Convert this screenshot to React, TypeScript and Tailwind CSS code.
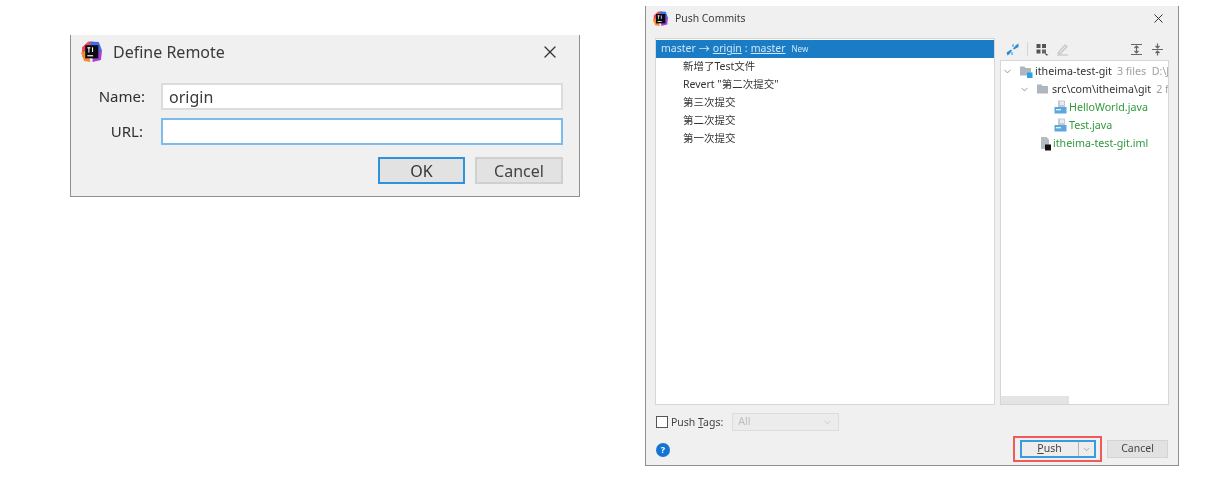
import type { ReactNode } from "react";
import { ChevronDown, X } from "lucide-react";

const font = "font-['Noto_Sans','Noto_Sans_CJK_SC',sans-serif]";

function IdeaLogo({ size }: { size: number }) {
  return (
    <svg width={size} height={size} viewBox="0 0 20 20" className="shrink-0">
      <path d="M1 6 L7 0.5 L13 1 L11 12 L1 15 Z" fill="#f0435f" />
      <path d="M9 0.5 L17 1 L20 9 L16 13 L9 8 Z" fill="#3f6fe8" />
      <path d="M0 11 L6 9 L9 20 L3 19 Z" fill="#f58b2c" />
      <path d="M11 11 L20 9 L19 18 L11 20 Z" fill="#a83fd6" />
      <rect x="4" y="4" width="12.5" height="12.5" fill="#0b0b10" />
      <rect x="6" y="13.5" width="5.5" height="1.1" fill="#fff" />
      <rect x="6" y="6" width="3" height="1" fill="#fff" />
      <rect x="7" y="6" width="1" height="5" fill="#fff" />
      <rect x="10.5" y="6" width="1" height="4.5" fill="#fff" />
    </svg>
  );
}

function Folder({ badge }: { badge?: boolean }) {
  return (
    <svg width="13" height="13" viewBox="0 0 13 13" className="shrink-0">
      <path d="M0 1.5 H4.5 L5.5 3 H11 V10.5 H0 Z" fill="#aeb6bf" />
      {badge && <rect x="7" y="7.5" width="5.5" height="5.5" fill="#2aa3e6" />}
    </svg>
  );
}

function JavaFile() {
  return (
    <svg width="13" height="14" viewBox="0 0 13 14" className="shrink-0">
      <path d="M4 0.5 H11 V8 H4 Z" fill="#c3cbd3" />
      <path d="M6 1.5 H10 V5 H6 Z" fill="#e8ecef" />
      <rect x="0.5" y="7" width="12" height="6.5" fill="#5ba7de" />
      <rect x="2" y="9" width="5" height="1.4" fill="#dcecf8" />
    </svg>
  );
}

function ImlFile() {
  return (
    <svg width="11" height="15" viewBox="0 0 11 15" className="shrink-0">
      <path d="M1 1 H6.5 L9 3.5 V13 H1 Z" fill="#b4bbc2" />
      <rect x="5" y="8.5" width="6" height="6" fill="#111" />
    </svg>
  );
}

function Field({ label, value, focused }: { label: string; value?: string; focused?: boolean }) {
  return (
    <div className="flex items-center">
      <span className={`w-[74px] text-right text-[15px] text-[#303030] ${focused ? "pr-[2px]" : ""}`}>{label}</span>
      <div
        className={`ml-[16px] flex h-[27px] flex-1 items-center border-2 bg-white pl-[6px] text-[16px] text-[#3a3a3a] ${
          focused ? "border-[#7cbcec]" : "border-[#dcdcdc]"
        }`}
      >
        {value}
      </div>
    </div>
  );
}

function DefineRemoteDialog() {
  return (
    <div className="ml-[70px] mt-[35px] flex h-[162px] w-[510px] shrink-0 flex-col border-x border-b border-[#8f8f8f] bg-[#f0f0f0]">
      <div className="flex h-[33px] items-center pl-[10px] pr-[19px]">
        <IdeaLogo size={21} />
        <span className="ml-[11px] text-[16px] text-[#3a3a3a]">Define Remote</span>
        <X className="ml-auto text-[#333]" size={20} strokeWidth={1.5} />
      </div>
      <div className="mt-[15px] flex flex-col gap-[8px] pr-[16px]">
        <Field label="Name:" value="origin" />
        <Field label="URL:" focused />
      </div>
      <div className="mt-[12px] flex justify-end gap-[10px] pr-[16px]">
        <div className="flex h-[27px] w-[87px] items-center justify-center border-2 border-[#2f92dc] bg-[#e2e2e2] text-[16px] text-[#333]">
          OK
        </div>
        <div className="flex h-[27px] w-[88px] items-center justify-center border-2 border-[#d0d0d0] bg-[#e2e2e2] text-[16px] text-[#444]">
          Cancel
        </div>
      </div>
    </div>
  );
}

const commits = ["新增了Test文件", 'Revert "第二次提交"', "第三次提交", "第二次提交", "第一次提交"];

function CommitList() {
  return (
    <div className="flex w-[340px] flex-col border border-[#d6d6d6] bg-white pt-[1px] text-[10.5px]">
      <div className="flex h-[18px] items-center bg-[#1b7cc6] pl-[5px] text-[#cfe6f7]">
        master <span className="mx-[3px] text-[11px]">→</span> <span className="underline">origin</span>
        <span className="mx-[3px]">:</span> <span className="underline">master</span>
        <span className="ml-[6px] text-[8px]">New</span>
      </div>
      {commits.map((c) => (
        <div key={c} className="flex h-[18px] items-center pl-[27px] text-[#333]">
          {c}
        </div>
      ))}
    </div>
  );
}

function TreeRow({ indent, chevron, icon, name, hint, green }: {
  indent: number;
  chevron?: boolean;
  icon: ReactNode;
  name: string;
  hint?: string;
  green?: boolean;
}) {
  return (
    <div className="flex h-[18px] items-center whitespace-pre" style={{ paddingLeft: indent }}>
      {chevron && <ChevronDown className="mr-[7px] shrink-0 text-[#777]" size={11} strokeWidth={1.6} />}
      {icon}
      <span className={`ml-[2px] ${green ? "text-[#2f9a3c]" : "text-[#333]"}`}>{name}</span>
      {hint && <span className="ml-[5px] text-[#a0a0a0]">{hint}</span>}
    </div>
  );
}

function Toolbar() {
  return (
    <div className="flex h-[22px] items-center pl-[6px] pr-[5px]">
      <svg width="13" height="13" viewBox="0 0 13 13">
        <path d="M0.5 9.5 L5 6.5 L6 7.5 L3.5 11 L1.5 12.5 Z M7 5.5 L10 2 L12.5 0.5 L12.5 4 L8 6.5 Z" fill="#2a8fd8" />
        <rect x="6.5" y="1" width="1" height="3" fill="#2a8fd8" />
        <rect x="5.5" y="9" width="1" height="3" fill="#2a8fd8" />
      </svg>
      <div className="mx-[8px] h-[14px] w-px bg-[#d4d4d4]" />
      <svg width="13" height="13" viewBox="0 0 13 13">
        <rect x="0.5" y="1" width="4" height="4" fill="#555" />
        <rect x="6" y="1" width="4" height="4" fill="#555" />
        <rect x="0.5" y="6.5" width="4" height="4" fill="#555" />
        <rect x="6" y="6.5" width="4" height="4" fill="#666" />
        <path d="M9 10 L12.5 12 L10 12.5 Z" fill="#444" />
      </svg>
      <svg width="13" height="13" viewBox="0 0 13 13" className="ml-[7px]" fill="none" stroke="#c4c4c4" strokeWidth="1.2">
        <path d="M2 10 L9 2 L11 3.5 L4 11 Z" />
        <path d="M1 12 H12" />
      </svg>
      <svg width="13" height="13" viewBox="0 0 13 13" className="ml-auto" fill="none" stroke="#666" strokeWidth="1.2">
        <path d="M1 1.5 H12 M1 11.5 H12 M6.5 3 V10 M4.5 5 L6.5 3 L8.5 5 M4.5 8 L6.5 10 L8.5 8" />
      </svg>
      <svg width="13" height="13" viewBox="0 0 13 13" className="ml-[8px]" fill="none" stroke="#666" strokeWidth="1.2">
        <path d="M1 6.5 H12 M6.5 0.5 V4.5 M4.5 3 L6.5 5 L8.5 3 M6.5 8.5 V12.5 M4.5 10 L6.5 8 L8.5 10" />
      </svg>
    </div>
  );
}

function ChangesTree() {
  return (
    <div className="flex w-[169px] flex-col">
      <Toolbar />
      <div className="flex min-h-0 flex-1 flex-col overflow-hidden border border-[#d6d6d6] bg-white pt-[1px] text-[10.7px]">
        <TreeRow indent={1} chevron icon={<Folder badge />} name="itheima-test-git" hint={"3 files  D:\\Je"} />
        <TreeRow indent={18} chevron icon={<Folder />} name="src\com\itheima\git" hint="2 files" />
        <TreeRow indent={53} icon={<JavaFile />} name="HelloWorld.java" green />
        <TreeRow indent={53} icon={<JavaFile />} name="Test.java" green />
        <TreeRow indent={39} icon={<ImlFile />} name="itheima-test-git.iml" green />
        <div className="mt-auto h-[8px] w-[68px] shrink-0 bg-[#e4e4e4]" />
      </div>
    </div>
  );
}

function PushCommitsDialog() {
  return (
    <div className="ml-[65px] mt-[6px] flex h-[460px] w-[534px] shrink-0 flex-col border-x border-b border-[#8f8f8f] bg-[#f0f0f0]">
      <div className="flex h-[25px] items-center pl-[7px] pr-[12px]">
        <IdeaLogo size={15} />
        <span className="ml-[7px] text-[10.4px] text-[#3a3a3a]">Push Commits</span>
        <X className="ml-auto text-[#333]" size={15} strokeWidth={1.6} />
      </div>
      <div className="mt-[7px] flex h-[367px] gap-[5px] pl-[9px]">
        <CommitList />
        <ChangesTree />
      </div>
      <div className="mt-[8px] flex h-[18px] items-center pl-[10px] text-[10.5px] text-[#444]">
        <div className="h-[12px] w-[12px] border border-[#555] bg-white" />
        <span className="ml-[3px] pt-[1px]">
          Push <span className="underline">T</span>ags:
        </span>
        <div className="ml-[9px] flex h-[18px] w-[107px] items-center justify-between border border-[#dcdcdc] bg-[#ececec] px-[5px] text-[#bdbdbd]">
          All
          <ChevronDown size={11} strokeWidth={1.5} />
        </div>
      </div>
      <div className="mt-[5px] flex items-center pl-[10px] pr-[10px]">
        <div className="mt-[2px] flex h-[14px] w-[14px] items-center justify-center rounded-full bg-[#1474d4] text-[9px] font-bold text-white">
          ?
        </div>
        <div className="ml-auto flex h-[26px] w-[89px] items-center justify-center border-2 border-[#f05a5a]">
          <div className="flex h-[18px] w-[76px] items-center border-2 border-[#3b9be0] bg-[#ededed] text-[10.5px] text-[#444]">
            <span className="flex-1 text-center">
              <span className="underline">P</span>ush
            </span>
            <div className="flex h-full w-[16px] items-center justify-center border-l border-[#b5b5b5]">
              <ChevronDown className="text-[#777]" size={9} strokeWidth={1.5} />
            </div>
          </div>
        </div>
        <div className="ml-[5px] flex h-[18px] w-[61px] items-center justify-center border border-[#d4d4d4] bg-[#e2e2e2] text-[10.5px] text-[#444]">
          Cancel
        </div>
      </div>
    </div>
  );
}

export default function App() {
  return (
    <div className={`flex h-[477px] w-[1223px] items-start overflow-hidden bg-white blur-[0.4px] ${font}`}>
      <DefineRemoteDialog />
      <PushCommitsDialog />
    </div>
  );
}
